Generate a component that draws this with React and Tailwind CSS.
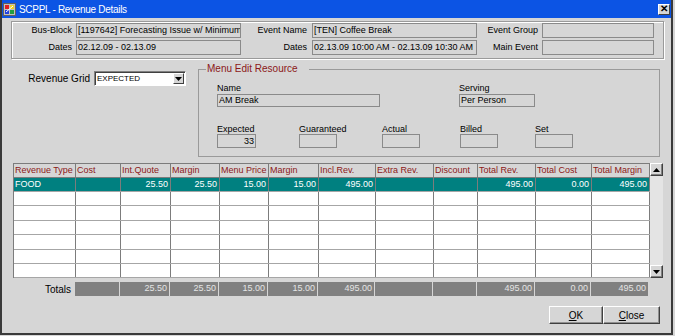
import React from "react";

const FONT = "font-['Liberation_Sans',Arial,sans-serif]";

const cols = [
  { name: "Revenue Type", w: "w-[62px]" },
  { name: "Cost", w: "w-[45px]" },
  { name: "Int.Quote", w: "w-[50px]" },
  { name: "Margin", w: "w-[49px]" },
  { name: "Menu Price", w: "w-[49px]" },
  { name: "Margin", w: "w-[50px]" },
  { name: "Incl.Rev.", w: "w-[57px]" },
  { name: "Extra Rev.", w: "w-[58px]" },
  { name: "Discount", w: "w-[44px]" },
  { name: "Total Rev.", w: "w-[58px]" },
  { name: "Total Cost", w: "w-[56px]" },
  { name: "Total Margin", w: "w-[58px]" },
];

const food = ["FOOD", "", "25.50", "25.50", "15.00", "15.00", "495.00", "", "", "495.00", "0.00", "495.00"];
const totals = ["", "25.50", "25.50", "15.00", "15.00", "495.00", "", "", "495.00", "0.00", "495.00"];
const rowHeights = ["h-[14px]", "h-[14px]", "h-[15px]", "h-[14px]", "h-[15px]", "h-[14px]", "h-[14px]"];

function Field({ w, h = "h-[15px]", children, right }) {
  return (
    <div
      className={`${w} ${h} border border-[#8a8a8a] bg-[#d6d6d6] overflow-hidden whitespace-nowrap px-[1px] flex items-center ${
        right ? "justify-end" : ""
      }`}
    >
      <span className="leading-none">{children}</span>
    </div>
  );
}

function AppIcon() {
  return (
    <svg width="13" height="13" viewBox="0 0 13 13">
      <rect x="0.5" y="0.5" width="12" height="12" fill="#c0c0c0" stroke="#606060" />
      <rect x="2" y="2" width="4" height="4" fill="#e02020" />
      <rect x="7" y="2" width="4" height="4" fill="#f0d020" />
      <rect x="2" y="7" width="4" height="4" fill="#2040e0" />
      <rect x="7" y="7" width="4" height="4" fill="#20a040" />
      <path d="M3 9 L10 3" stroke="#ffffff" strokeWidth="1" />
    </svg>
  );
}

function Tri({ up }) {
  return (
    <svg width="7" height="4" viewBox="0 0 7 4">
      {up ? <path d="M3.5 0 L7 4 L0 4 Z" fill="#000" /> : <path d="M0 0 L7 0 L3.5 4 Z" fill="#000" />}
    </svg>
  );
}

function ScrollBtn({ up }) {
  return (
    <div className="w-[13px] h-[13px] bg-[#d6d6d6] border border-t-white border-l-white border-r-[#404040] border-b-[#404040] flex items-center justify-center shadow-[inset_-1px_-1px_0_#808080]">
      <Tri up={up} />
    </div>
  );
}

function Btn({ w, children }) {
  return (
    <button className={`${w} h-[18px] bg-[#d6d6d6] border border-t-white border-l-white border-r-[#404040] border-b-[#404040] shadow-[inset_-1px_-1px_0_#909090] text-[10px] text-black flex items-center justify-center`}>
      {children}
    </button>
  );
}

export default function App() {
  return (
    <div className={`w-[675px] h-[336px] bg-[#d6d6d6] ${FONT} text-[9px] text-black`}>
      <div className="w-[673px] h-[335px] border-l-2 border-r-2 border-b-2 border-[#3a3a3a] flex flex-col">
        {/* Title bar */}
        <div className="h-[18px] bg-[#0c54e4] flex items-center">
          <div className="ml-[1px]">
            <AppIcon />
          </div>
          <span className="ml-[3px] text-white text-[10px] tracking-[-0.3px]">SCPPL - Revenue Details</span>
          <div className="ml-auto mr-[1px] w-[12px] h-[11px] bg-[#d6d6d6] border border-t-white border-l-white border-r-[#404040] border-b-[#404040] flex items-center justify-center text-[10px] font-bold leading-none">
            ✕
          </div>
        </div>

        {/* Top group */}
        <div className="ml-[9px] mt-[3px] w-[653px] h-[38px] border border-[#9a9a9a] shadow-[inset_1px_1px_0_#ffffff,1px_1px_0_#ffffff] pt-[1px] flex flex-col gap-[2px]">
          <div className="flex items-center h-[15px]">
            <div className="w-[60px] text-right">Bus-Block</div>
            <div className="ml-[4px]">
              <Field w="w-[165px]">[1197642] Forecasting Issue w/ Minimum</Field>
            </div>
            <div className="w-[66px] text-right">Event Name</div>
            <div className="ml-[5px]">
              <Field w="w-[165px]">[TEN] Coffee Break</Field>
            </div>
            <div className="w-[61px] text-right">Event Group</div>
            <div className="ml-[4px]">
              <Field w="w-[112px]"></Field>
            </div>
          </div>
          <div className="flex items-center h-[15px]">
            <div className="w-[60px] text-right">Dates</div>
            <div className="ml-[4px]">
              <Field w="w-[165px]">02.12.09 - 02.13.09</Field>
            </div>
            <div className="w-[66px] text-right">Dates</div>
            <div className="ml-[5px]">
              <Field w="w-[165px]">02.13.09 10:00 AM - 02.13.09 10:30 AM</Field>
            </div>
            <div className="w-[61px] text-right">Main Event</div>
            <div className="ml-[4px]">
              <Field w="w-[112px]"></Field>
            </div>
          </div>
        </div>

        {/* Middle */}
        <div className="flex h-[98px]">
          <div className="w-[196px]">
            <div className="mt-[12px] flex items-center">
              <div className="w-[88px] text-right text-[10px]">Revenue Grid</div>
              <div className="ml-[4px] w-[92px] h-[15px] bg-white border border-t-[#808080] border-l-[#808080] border-r-white border-b-white shadow-[inset_1px_1px_0_#404040] flex items-center">
                <span className="ml-[2px] text-[8px]">EXPECTED</span>
                <div className="ml-auto mr-[1px] w-[11px] h-[11px] bg-[#d6d6d6] border border-t-white border-l-white border-r-[#404040] border-b-[#404040] flex items-center justify-center">
                  <Tri />
                </div>
              </div>
            </div>
          </div>
          <fieldset className="mt-[5px] w-[462px] h-[93px] border border-[#9a9a9a]">
            <legend className="ml-[7px] pl-[1px] pr-[11px] text-[10px] leading-[10px] text-[#8c1818]">Menu Edit Resource</legend>
            <div className="pl-[18px]">
              <div className="pt-[9px] flex">
                <div className="w-[242px]">
                  <div className="h-[11px] leading-[11px]">Name</div>
                  <Field w="w-[163px]" h="h-[13px]">AM Break</Field>
                </div>
                <div>
                  <div className="h-[11px] leading-[11px]">Serving</div>
                  <Field w="w-[76px]" h="h-[13px]">Per Person</Field>
                </div>
              </div>
              <div className="mt-[17px] flex">
                <div className="w-[82px]">
                  <div className="h-[10px] leading-[10px]">Expected</div>
                  <Field w="w-[39px]" h="h-[14px]" right>33</Field>
                </div>
                <div className="w-[83px]">
                  <div className="h-[10px] leading-[10px]">Guaranteed</div>
                  <Field w="w-[38px]" h="h-[14px]"></Field>
                </div>
                <div className="w-[78px]">
                  <div className="h-[10px] leading-[10px]">Actual</div>
                  <Field w="w-[38px]" h="h-[14px]"></Field>
                </div>
                <div className="w-[75px]">
                  <div className="h-[10px] leading-[10px]">Billed</div>
                  <Field w="w-[38px]" h="h-[14px]"></Field>
                </div>
                <div>
                  <div className="h-[10px] leading-[10px]">Set</div>
                  <Field w="w-[38px]" h="h-[14px]"></Field>
                </div>
              </div>
            </div>
          </fieldset>
        </div>

        {/* Table */}
        <div className="ml-[11px] mt-[6px] flex">
          <div className="w-[637px] border-l border-t border-[#7c7c7c] bg-white">
            <div className="flex h-[14px] border-b border-[#7c7c7c] bg-[#d6d6d6]">
              {cols.map((c, i) => (
                <div key={i} className={`${c.w} h-full border-r border-[#7c7c7c] pl-[1px] text-[#8c1818] whitespace-nowrap overflow-hidden flex items-center`}>
                  {c.name}
                </div>
              ))}
            </div>
            <div className="flex h-[14px] border-b border-[#a6a6a6] bg-[#008080] text-white">
              {cols.map((c, i) => (
                <div key={i} className={`${c.w} h-full border-r border-[#7c7c7c] flex items-center ${i === 0 ? "pl-[1px]" : "justify-end pr-[2px]"}`}>
                  {food[i]}
                </div>
              ))}
            </div>
            {rowHeights.slice(1).map((h, r) => (
              <div key={r} className={`flex ${h} border-b border-[#a6a6a6]`}>
                {cols.map((c, i) => (
                  <div key={i} className={`${c.w} h-full border-r border-[#7c7c7c]`} />
                ))}
              </div>
            ))}
          </div>
          <div className="w-[13px] h-[115px] bg-[#e4e4e4] flex flex-col justify-between">
            <ScrollBtn up />
            <ScrollBtn />
          </div>
        </div>

        {/* Totals */}
        <div className="ml-[11px] mt-[4px] flex h-[14px]">
          <div className="w-[62px] text-right pr-[4px] text-[10px] flex items-center justify-end">Totals</div>
          {cols.slice(1).map((c, i) => (
            <div key={i} className={`${c.w} h-full pr-[1px]`}>
              <div className="h-full bg-[#808080] text-[#e4e4e4] flex items-center justify-end pr-[2px]">{totals[i]}</div>
            </div>
          ))}
        </div>

        {/* Buttons */}
        <div className="mt-[10px] flex justify-end pr-[11px]">
          <Btn w="w-[54px]">
            <span>
              <span className="underline">O</span>K
            </span>
          </Btn>
          <Btn w="w-[57px]">
            <span>
              <span className="underline">C</span>lose
            </span>
          </Btn>
        </div>
      </div>
    </div>
  );
}
